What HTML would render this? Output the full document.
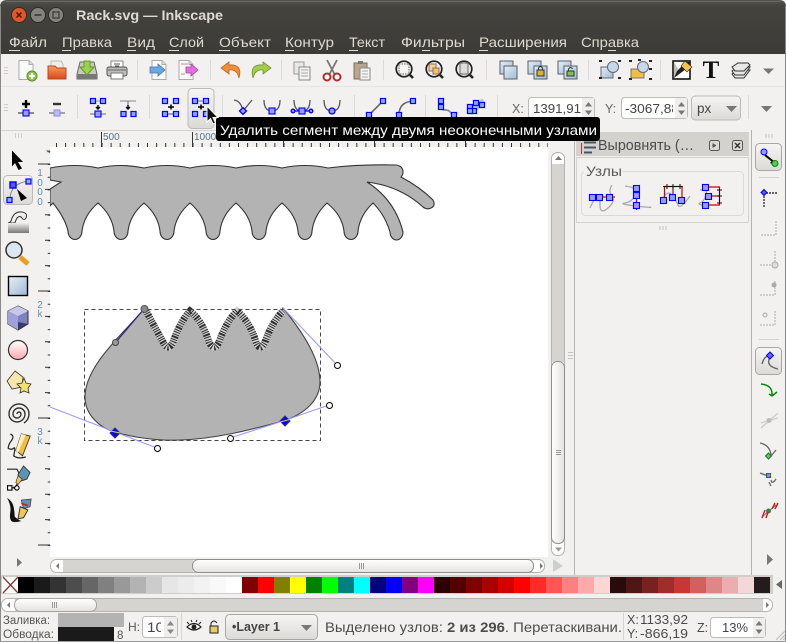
<!DOCTYPE html>
<html><head><meta charset="utf-8"><title>Rack.svg — Inkscape</title>
<style>
html,body{margin:0;padding:0;background:#f2f1f0;overflow:hidden}
svg{display:block}
text{font-family:"Liberation Sans","DejaVu Sans",sans-serif}
</style></head><body>
<svg xmlns="http://www.w3.org/2000/svg" width="786" height="642" viewBox="0 0 786 642">
<defs>
<linearGradient id="tb" x1="0" y1="0" x2="0" y2="1"><stop offset="0" stop-color="#55534d"/><stop offset=".12" stop-color="#45433e"/><stop offset="1" stop-color="#3c3b37"/></linearGradient>
<linearGradient id="btn" x1="0" y1="0" x2="0" y2="1"><stop offset="0" stop-color="#f6f5f4"/><stop offset="1" stop-color="#dcdad7"/></linearGradient>
<linearGradient id="thumbH" x1="0" y1="0" x2="0" y2="1"><stop offset="0" stop-color="#fff"/><stop offset="1" stop-color="#e4e2df"/></linearGradient>
<linearGradient id="thumbV" x1="0" y1="0" x2="1" y2="0"><stop offset="0" stop-color="#fff"/><stop offset="1" stop-color="#e4e2df"/></linearGradient>
<linearGradient id="blue" x1="0" y1="0" x2="1" y2="1"><stop offset="0" stop-color="#e6eef5"/><stop offset="1" stop-color="#9dbbd4"/></linearGradient>
<linearGradient id="pink" x1="0" y1="0" x2="0" y2="1"><stop offset="0" stop-color="#fff"/><stop offset="1" stop-color="#ffa8b0"/></linearGradient>
<linearGradient id="folder" x1="0" y1="0" x2="0" y2="1"><stop offset="0" stop-color="#f89a5c"/><stop offset="1" stop-color="#d8481c"/></linearGradient>
<linearGradient id="tw" x1="0" y1="0" x2="0" y2="1"><stop offset="0" stop-color="#eee"/><stop offset="1" stop-color="#777"/></linearGradient>
<rect id="n" x="-3" y="-3" width="6" height="6" fill="#9a9aff" stroke="#00f" stroke-width="1.100"/>
<rect id="m" x="-2.500" y="-2.500" width="5" height="5" fill="#8fa8ff" stroke="#00f" stroke-width="1.200"/>
<g id="page"><path d="M-7-9.500H3L7-5.500V9.500H-7Z" fill="#fafafa" stroke="#aaa"/><path d="M3-9.500V-5.500H7" fill="#ddd" stroke="#aaa"/></g>
<g id="mag"><circle cx="-1" cy="-1" r="7.800" fill="#eee" stroke="#222" stroke-width="1.700"/><path d="M5 5 L8 8" stroke="#222" stroke-width="2.600"/></g>
<g id="sq2"><rect x="-9" y="-9" width="13" height="13" fill="url(#blue)" stroke="#55606a"/></g>
</defs>

<rect width="786" height="642" fill="#f2f1f0"/>

<!-- title bar & menu -->
<path d="M0 54V7Q0 0 7 0H779Q786 0 786 7V54Z" fill="url(#tb)"/>
<rect y="1" x="6" width="774" height="1" fill="#6a6862"/>
<circle cx="19" cy="15" r="7.500" fill="#e4562a" stroke="#2e2d2a"/>
<path d="M16.500 12.500l5 5m0-5l-5 5" stroke="#4a1a08" stroke-width="1.500"/>
<circle cx="38" cy="15" r="7.500" fill="#85837c" stroke="#2e2d2a"/>
<path d="M34.500 15h7" stroke="#3a3934" stroke-width="1.600"/>
<circle cx="56" cy="15" r="7.500" fill="#85837c" stroke="#2e2d2a"/>
<rect x="53" y="12" width="6" height="6" fill="none" stroke="#3a3934" stroke-width="1.200"/>
<text x="76" y="20" font-size="14" font-weight="bold" fill="#dfdbd2" textLength="147" lengthAdjust="spacingAndGlyphs">Rack.svg — Inkscape</text>

<g font-size="14" fill="#dfdbd2">
<text x="9" y="47" textLength="38" lengthAdjust="spacingAndGlyphs">Файл</text>
<text x="62" y="47" textLength="50" lengthAdjust="spacingAndGlyphs">Правка</text>
<text x="127" y="47" textLength="28" lengthAdjust="spacingAndGlyphs">Вид</text>
<text x="169" y="47" textLength="35" lengthAdjust="spacingAndGlyphs">Слой</text>
<text x="219" y="47" textLength="52" lengthAdjust="spacingAndGlyphs">Объект</text>
<text x="285" y="47" textLength="49" lengthAdjust="spacingAndGlyphs">Контур</text>
<text x="349" y="47" textLength="36" lengthAdjust="spacingAndGlyphs">Текст</text>
<text x="401" y="47" textLength="64" lengthAdjust="spacingAndGlyphs">Фильтры</text>
<text x="479" y="47" textLength="88" lengthAdjust="spacingAndGlyphs">Расширения</text>
<text x="581" y="47" textLength="58" lengthAdjust="spacingAndGlyphs">Справка</text>
</g>
<path d="M9 50.500h11M62 50.500h9M127 50.500h9M169 50.500h10M219 50.500h11M285 50.500h9M349 50.500h9M422 50.500h8M479 50.500h9M608 50.500h8" stroke="#dfdbd2" fill="none"/>

<!-- toolbar separators -->
<path d="M0 86.500H786" stroke="#e6e5e3"/>
<path d="M1 130.500H575" stroke="#d6d4d1"/>
<path d="M137.500 60v20M210.500 60v20M281.500 60v20M383.500 60v20M486.500 60v20M588.500 60v20M660.500 60v20" stroke="#dcdad7"/>
<path d="M77.500 95v24M149.500 95v24M222.500 95v24M354.500 95v24M425.500 95v24M497.500 95v24M748.500 95v24" stroke="#dcdad7"/>
<path d="M4 67.500h4M4 70.500h4M4 73.500h4M4 104.500h4M4 107.500h4M4 110.500h4" stroke="#cfcdca"/>

<!-- Row 1 icons -->
<g transform="translate(27,70)"><use href="#page" x="-1"/><circle cx="5" cy="6" r="5" fill="#8fc750" stroke="#5b8f2a"/><path d="M5 3v6M2 6h6" stroke="#fff" stroke-width="1.800"/></g>
<g transform="translate(57,70)"><path d="M-6-9H4L6-6V0H-6Z" fill="#eee" stroke="#bba"/><path d="M-9-4H-2L0-2H9V9H-9Z" fill="url(#folder)" stroke="#b84a20"/></g>
<g transform="translate(87,70)"><path d="M-7-8H7L10 4V9H-10V4Z" fill="#c7c9c3" stroke="#666"/><rect x="-10" y="4" width="20" height="5" fill="#777"/><path d="M-3-9H3V-3H7L0 5-7-3H-3Z" fill="#9bd24a" stroke="#5f9a22"/></g>
<g transform="translate(117,70)"><rect x="-6" y="-9" width="12" height="7" fill="#fff" stroke="#888"/><rect x="-10" y="-3" width="20" height="9" rx="2" fill="#bdbdb9" stroke="#555"/><rect x="-6" y="3" width="12" height="6" fill="#fff" stroke="#777"/><path d="M-3-6h6M-2-4h4" stroke="#555"/><path d="M-9 0h18" stroke="#666"/></g>
<g transform="translate(158,70)"><use href="#page" x="1"/><path d="M-8-3H0V-6L7 0 0 6V3H-8Z" fill="#6da5dc" stroke="#3f79b5" stroke-width=".8"/></g>
<g transform="translate(188,70)"><use href="#page" x="-2"/><path d="M-2-3H3V-6L10 0 3 6V3H-2Z" fill="#e06fe0" stroke="#a93fa9" stroke-width=".8"/><path d="M-7-6H0M-7 4h4" stroke="#c88"/></g>
<g transform="translate(231,70)"><path d="M-2-8L-10-2-2 4V0Q6-1 8 8Q12-6-2-5Z" fill="#ef8e3c" stroke="#c56216" stroke-width=".8"/></g>
<g transform="translate(261,70)"><path d="M2-8L10-2 2 4V0Q-6-1-8 8Q-12-6 2-5Z" fill="#a3cb4d" stroke="#6d9624" stroke-width=".8"/></g>
<g transform="translate(302,70)"><rect x="-8" y="-8" width="10" height="12" fill="#e8e8e6" stroke="#999"/><rect x="-3" y="-3" width="11" height="13" fill="#f2f2f0" stroke="#888"/><path d="M-1 0h7M-1 3h7M-1 6h7" stroke="#aaa"/></g>
<g transform="translate(332,70)"><path d="M-5-10L3 5M5-10L-3 5" stroke="#777" stroke-width="1.800"/><circle cx="-5" cy="7" r="3.500" fill="#fff" stroke="#b52a2a" stroke-width="2"/><circle cx="5" cy="7" r="3.500" fill="#fff" stroke="#b52a2a" stroke-width="2"/></g>
<g transform="translate(362,70)"><rect x="-8" y="-7" width="13" height="16" fill="#b8a68f" stroke="#7d6f5a"/><rect x="-4" y="-9" width="5" height="3" fill="#777"/><rect x="-2" y="-2" width="10" height="12" fill="#f5f5f3" stroke="#888"/><path d="M0 1h6M0 4h6M0 7h6" stroke="#aaa"/></g>
<g transform="translate(405,70)"><use href="#mag"/><rect x="-6" y="-6" width="10" height="10" fill="#f4f4f4" stroke="#666" stroke-dasharray="1.500 1"/></g>
<g transform="translate(435,70)"><use href="#mag"/><rect x="-6" y="-6" width="7" height="7" fill="#f0d88a" stroke="#967"/><rect x="-2" y="-2" width="6" height="6" fill="#f0c860" stroke="#967"/></g>
<g transform="translate(465,70)"><use href="#mag"/><rect x="-5" y="-7" width="8" height="11" fill="#ddd" stroke="#666"/></g>
<g transform="translate(508,70)"><use href="#sq2" x="1"/><rect x="-4" y="-4" width="13" height="13" fill="url(#blue)" stroke="#55606a"/></g>
<g transform="translate(538,70)"><use href="#sq2" x="-1"/><rect x="-4" y="-4" width="13" height="13" fill="url(#blue)" stroke="#55606a"/><rect x="-1" y="0" width="7" height="6" fill="#e0b030" stroke="#333"/><path d="M0.500 0v-2q2-3 4 0v2" fill="none" stroke="#333"/></g>
<g transform="translate(568,70)"><use href="#sq2" x="-1"/><rect x="-4" y="-4" width="13" height="13" fill="url(#blue)" stroke="#55606a"/><rect x="-1" y="1" width="7" height="5" fill="#7cc24a" stroke="#333"/><path d="M0.500 1v-2q2-3 4 0" fill="none" stroke="#333"/></g>
<g transform="translate(610,70)"><rect x="-9" y="-3" width="12" height="11" fill="url(#blue)" stroke="#667"/><circle cx="3" cy="-3" r="5.500" fill="#c5d9e8" stroke="#667"/><path d="M-11-9h3M-11 8h3M8-9h3M8 8h3" stroke="#222" stroke-width="2"/></g>
<g transform="translate(640,70)"><rect x="-9" y="-1" width="13" height="9" fill="#f0bf40" stroke="#776"/><circle cx="3" cy="-3" r="5.500" fill="#c5d9e8" stroke="#667"/><path d="M-11-9h3M-11 9h3M9-9h3M9 9h3M-2-10h3M9-1h3" stroke="#222" stroke-width="2"/></g>
<g transform="translate(682,70)"><rect x="-9" y="-9" width="17" height="18" fill="#fff" stroke="#111" stroke-width="1.600"/><path d="M-8 8V4L4-8H8V-4Z" fill="#222"/><path d="M-8 8L-4-1-8-8Z" fill="#bbb"/><path d="M3-9L10-3 5 2-1-4Z" fill="#f3c44a" stroke="#222" stroke-width=".6"/></g>
<text x="711" y="78" font-size="25" font-weight="bold" text-anchor="middle" fill="#111" style="font-family:'Liberation Serif',serif">T</text>
<g transform="translate(741,70)" fill="#e8e8e6" stroke="#333"><path d="M-9 4L-3 0H9L3 8H-6Z"/><path d="M-9 1L-3-3H9L3 5H-6Z"/><path d="M-9-3L-3-7H7L9-5 3 1H-6Z"/></g>
<path d="M763 68.500h11L768.500 74Z" fill="#777"/>

<!-- Row 2 hover button -->
<rect x="188" y="88.500" width="26" height="40" rx="4" fill="url(#btn)" stroke="#bdbbb7"/>

<!-- Row 2 icons -->
<g transform="translate(26,108)"><path d="M-8 5H8" stroke="#666" stroke-width="1.500"/><path d="M0-8v8M-4-4H4" stroke="#000" stroke-width="2.400"/><use href="#n" y="5"/></g>
<g transform="translate(57,108)"><path d="M-8 5H8" stroke="#888" stroke-width="1.500"/><path d="M-4-4H4" stroke="#333" stroke-width="2.400"/><rect x="-3" y="2" width="6" height="6" fill="#bbbbff" stroke="#8888dd"/></g>
<g transform="translate(98,108)"><path d="M-8 6H8" stroke="#666"/><path d="M-7-7H7" stroke="#999"/><use href="#m" x="-5" y="-7"/><use href="#m" x="5" y="-7"/><use href="#n" y="6"/><path d="M0-3v3M-2-1l2 2 2-2" stroke="#000" stroke-width="1.400" fill="none"/></g>
<g transform="translate(128,108)"><path d="M-8-7H8" stroke="#888"/><path d="M0-7V0" stroke="#666"/><use href="#m" x="-4.500" y="6"/><use href="#m" x="5.500" y="6"/><path d="M0-3v3M-2-1l2 2 2-2" stroke="#000" stroke-width="1.400" fill="none"/></g>
<g transform="translate(171,108)"><use href="#m" x="-6" y="-7"/><use href="#m" x="5" y="-7"/><path d="M-6 6H5" stroke="#555"/><use href="#m" x="-6" y="6"/><use href="#m" x="5" y="6"/><path d="M-3-1h6M0-3.500v5" stroke="#000" stroke-width="1.500"/></g>
<g transform="translate(201,108)"><path d="M-8-7H8" stroke="#777"/><use href="#m" x="-6" y="-7"/><use href="#m" x="5" y="-7"/><use href="#m" x="-6" y="6"/><use href="#m" x="5" y="6"/><path d="M-3-1h6M0-3.500v5" stroke="#000" stroke-width="1.500"/></g>
<g fill="none" stroke="#555" stroke-width="1.300">
<g transform="translate(243,108)"><path d="M-9-8Q-2-7 0 3M9-8Q5-3 0 3"/><path d="M0-.5L3.500 3 0 6.500-3.500 3Z" fill="#99f" stroke="#00f"/></g>
<g transform="translate(272,108)"><path d="M-8-8Q-8 3 0 3T8-8"/><use href="#n" y="3"/></g>
<g transform="translate(302,108)"><path d="M-8-8Q-8 3 0 3T8-8"/><path d="M-9 3H9" stroke="#00f"/><circle cx="-9" cy="3" r="1.800" fill="#99f" stroke="#00f"/><circle cx="9" cy="3" r="1.800" fill="#99f" stroke="#00f"/><use href="#n" y="3"/></g>
<g transform="translate(332,108)"><path d="M-8-8Q-8 3 0 3T8-8"/><circle cy="3" r="3" fill="#99f" stroke="#00f"/></g>
<g transform="translate(376,108)"><path d="M-7 7L7-7" stroke="#666" stroke-width="1.600"/><use href="#m" x="-7" y="7"/><use href="#m" x="7" y="-7"/></g>
<g transform="translate(406,108)"><path d="M-7 7Q-7-6 7-7" stroke="#666" stroke-width="1.600"/><use href="#m" x="-7" y="7"/><use href="#m" x="7" y="-7"/></g>
<g transform="translate(446,108)"><path d="M-6-8V0Q-4 2 0 2T7 8" stroke="#888" stroke-width="1.800"/><use href="#m" x="-5" y="-7"/><use href="#m" x="-5" y="-1"/><use href="#m" x="8" y="7"/></g>
<g transform="translate(476,108)"><path d="M-5 3L8-7" stroke="#a9c2dc" stroke-width="6"/><use href="#m" x="-6" y="-1"/><use href="#m" x="0" y="-5"/><use href="#m" x="-2" y="3"/><use href="#m" x="6" y="-3"/><use href="#m" x="-6" y="3"/></g>
</g>

<!-- X Y fields -->
<text x="512" y="113" font-size="12.500" fill="#666">X:</text>
<rect x="528.500" y="97.500" width="66" height="21" rx="3" fill="#fff" stroke="#bdbbb7"/>
<text x="533" y="113" font-size="13" fill="#444" textLength="48" lengthAdjust="spacingAndGlyphs">1391,91</text>
<rect x="582" y="98" width="12" height="20" fill="#efeeec"/>
<path d="M585 106.500h7L588.500 102ZM585 110.500h7L588.500 115Z" fill="#777"/>
<text x="605" y="113" font-size="12.500" fill="#666">Y:</text>
<rect x="621.500" y="97.500" width="66" height="21" rx="3" fill="#fff" stroke="#bdbbb7"/>
<text x="625" y="113" font-size="13" fill="#444" textLength="54" lengthAdjust="spacingAndGlyphs">-3067,88</text>
<rect x="673" y="98" width="14" height="20" fill="#fff"/>
<rect x="675" y="98" width="12" height="20" fill="#efeeec"/>
<path d="M678 106.500h7L681.500 102ZM678 110.500h7L681.500 115Z" fill="#777"/>
<rect x="691.500" y="96" width="49" height="24" rx="4" fill="url(#btn)" stroke="#bdbbb7"/>
<text x="697" y="113" font-size="13.500" fill="#444">px</text>
<path d="M726 106h11L731.500 112Z" fill="#777"/>
<path d="M761 106h11L766.500 112Z" fill="#777"/>

<!-- canvas -->
<rect x="50" y="147" width="498" height="410" fill="#fff"/>

<!-- upper shape -->
<path d="M50 168Q75 163 98 168Q121 163 144 168Q167 163 190 168Q213 163 236 168Q259 163 282 168Q305 163 328 168Q360 164 396 165Q403 166 403 172Q403 175 401 177Q420 187 433 200Q436 206 431 208Q427 210 423 207Q400 186 367 182Q395 200 403 232A6.500 8 0 0 1 390 232Q385 215 373 203Q360 215 358 231A7 8.500 0 0 1 344 231Q342 215 327 203Q314 215 312 231A7 8.500 0 0 1 298 231Q296 215 282 203Q268 215 266 231A7 8.500 0 0 1 252 231Q250 215 236 203Q222 215 220 231A7 8.500 0 0 1 206 231Q204 215 190 203Q176 215 174 231A7 8.500 0 0 1 160 231Q158 215 144 203Q130 215 128 231A7 8.500 0 0 1 114 231Q112 215 98 203Q84 215 82 231A7 8.500 0 0 1 68 231Q65 218 53 203L50 206V189L61 182 50 180Z" fill="#b3b3b3" stroke="#333" stroke-width="1.100"/>

<!-- lower shape -->
<path d="M144 309C125 332 85 365 85 397C85 415 100 428 115 432C135 438 160 441 180 440C215 439 250 430 283 421C305 414 320 400 320 382C320 360 305 335 283 308Q270 325 264 345Q260 350 257 345Q250 322 237 308Q225 322 218 345Q214 350 211 345Q205 320 190 308Q178 325 172 345Q168 350 165 345Q160 325 144 309Z" fill="#b3b3b3" stroke="#444" stroke-width="1.100"/>
<path d="M146 311L163 342Q168 352 173 342Q180 322 190 311Q202 320 209 342Q214 352 219 342Q226 322 237 311Q250 322 256 342Q260 352 265 342Q272 322 283 311" fill="none" stroke="#d0d0d0" stroke-width="7"/>
<path d="M146 311L163 342Q168 352 173 342Q180 322 190 311Q202 320 209 342Q214 352 219 342Q226 322 237 311Q250 322 256 342Q260 352 265 342Q272 322 283 311" fill="none" stroke="#111" stroke-width="7" stroke-dasharray="1 1.200 1 1.200 2 1 1 1.600" opacity=".85"/>
<rect x="84.500" y="309.500" width="236" height="131" fill="none" stroke="#444" stroke-dasharray="4 3"/>
<!-- handles -->
<path d="M144 309L116 342" stroke="#22228c" stroke-width="1.100"/>
<path d="M283 308L337 365M50 407L115 432L157 448M230 438L283 421L329 405" stroke="#9b9bff" stroke-width="1.100" fill="none"/>
<circle cx="115.500" cy="342.500" r="3" fill="#999" stroke="#444"/>
<circle cx="144.500" cy="309" r="3.500" fill="#888" stroke="#555"/>
<circle cx="337.500" cy="365.500" r="3" fill="#fff" stroke="#000"/>
<circle cx="157.500" cy="448.500" r="3" fill="#fff" stroke="#000"/>
<circle cx="230.500" cy="438.500" r="3" fill="#fff" stroke="#000"/>
<circle cx="329.500" cy="405.500" r="3" fill="#fff" stroke="#000"/>
<path d="M115 428L120 433 115 438 110 433Z" fill="#00f" stroke="#33337a"/>
<path d="M110.500 431L120 433" stroke="#e6d640"/>
<path d="M285 416L290 421 285 426 280 421Z" fill="#00f" stroke="#33337a"/>
<path d="M280 422L290 419.500" stroke="#e6d640"/>

<!-- rulers -->
<rect x="1" y="131" width="49" height="16" fill="#f2f1f0"/>
<rect x="0" y="147" width="50" height="426" fill="#f2f1f0"/>
<rect x="50" y="131" width="498" height="16" fill="#f2f1f0"/>
<g stroke="#333" fill="none">
<line x1="49" y1="151.300" x2="49" y2="557" stroke-width="2.500" stroke-dasharray="1 11.700"/>
<line x1="47.500" y1="163.500" x2="47.500" y2="557" stroke-width="5" stroke-dasharray="1 24.400"/>
<line x1="44" y1="163.500" x2="44" y2="557" stroke-width="12" stroke-dasharray="1 126"/>
<line x1="56" y1="145" x2="548" y2="145" stroke-width="4" stroke-dasharray="1 8.100"/>
<path d="M101.500 132V147M192.500 132V147M283.500 132V147M374.500 132V147M465.500 132V147" stroke-width="1"/>
</g>
<path d="M46 150.500H50V153L47 151.500Z" fill="#555"/>
<text x="103" y="140" font-size="10" fill="#5a7288">500</text>
<text x="194" y="140" font-size="10" fill="#5a7288">1000</text>
<g font-size="10" fill="#5f8fb8" text-anchor="middle"><text x="40" y="176">1</text><text x="40" y="186">0</text><text x="40" y="195">0</text><text x="40" y="205">0</text><text x="40" y="308">2</text><text x="40" y="317">k</text><text x="40" y="435">3</text><text x="40" y="444">k</text></g>
<path d="M15.500 133v5M18.500 133v5M21.500 133v5" stroke="#cfcdca"/>

<!-- Left tools -->
<path d="M12 149.500L23 161 18 161 22 167.500 18.500 169 15 162 12 165.500Z" fill="#000" transform="translate(0,1)"/>
<rect x="3.500" y="175.500" width="29" height="29" rx="4" fill="url(#btn)" stroke="#bdbbb7"/>
<path d="M10 199Q10 184 28 181" fill="none" stroke="#888"/>
<use href="#m" x="28.500" y="181.500"/><use href="#m" x="9.500" y="200"/>
<rect x="10" y="182" width="6" height="6" fill="#55f" stroke="#00f" stroke-width="1.400"/>
<path d="M17 189L27 198 21 201Z" fill="#000"/>
<g transform="translate(18,222)"><path d="M-10 1Q-7 1-6-4Q-3-11 4-10Q10-9 8-4Q6-1 4-4Q2-7-1-4Q-3 0-3 1Z" fill="#eee" stroke="#333"/><rect x="-10" y="1" width="21" height="10" fill="url(#tw)"/></g>
<g transform="translate(14,250)"><path d="M6 7L14 14" stroke="#e6a020" stroke-width="5"/><circle r="8" cx="0" cy="0" fill="#dbe7f0" stroke="#333" stroke-width="1.500"/></g>
<rect x="8.500" y="276.500" width="19" height="19" fill="url(#blue)" stroke="#000" stroke-width="1.400"/>
<g transform="translate(18,318)"><path d="M0-12L10-7V6L0 12-10 6V-7Z" fill="#8080c0" stroke="#333"/><path d="M0-12L10-7 0-2-10-7Z" fill="#c8c8e8"/><path d="M-10-7L0-2V12L-10 6Z" fill="#a0a0d8"/><path d="M0 4L10 6 0 12Z" fill="#3a3a6a"/></g>
<circle cx="18" cy="350" r="9.500" fill="url(#pink)" stroke="#333" stroke-width="1.200"/>
<g transform="translate(18,382)" stroke="#333" stroke-width=".8"><path d="M-3-11L5-5 4 5-6 7-11-1Z" fill="#f5e8a8"/><path d="M6-4L8 1 13 2 10 6 11 11 6 9 2 11 3 6-1 2 4 1Z" fill="#f5e070"/></g>
<path d="M17 414a2 2 0 0 1 4 0a4 4 0 0 1-8 0a6 6 0 0 1 12 0a8 8 0 0 1-16 0a10 10 0 0 1 20 0a11 11 0 0 1-5 9" fill="none" stroke="#333" stroke-width="1.400"/>
<g transform="translate(17,446) scale(1.100)"><path d="M-6-11Q-2-9-5-5T-8 2Q-5 4-3 2T-3 9Q1 12 8 10" fill="none" stroke="#222" stroke-width="1.100"/><path d="M4-11L12-9 5 9 -1 4Z" fill="#f3bd3e" stroke="#333" stroke-width=".8"/><path d="M4-11L8-10 1 6-1 4Z" fill="#fff0c0"/></g>
<g transform="translate(18,478) scale(1.100)"><path d="M-10-8H-1Q3-2 0 4T-4 8" fill="none" stroke="#222"/><rect x="-9.500" y="7" width="4" height="4" fill="#fff" stroke="#000"/><circle cx="-1" cy="9" r="2" fill="#fff" stroke="#000"/><path d="M-5 9H-3" stroke="#000"/><path d="M5-11L11-5 8 1 2 3 0-3Z" fill="#5d93b5" stroke="#333" stroke-width=".8"/><path d="M0-2L4 1 0 6-2 4Z" fill="#f3c45a" stroke="#333" stroke-width=".6"/></g>
<g transform="translate(18,510) scale(1.100)"><path d="M-10-11Q-5-8-4-3T-3 6Q0 9 3 10Q-4 12-6 10T-7 2T-10-11Z" fill="#111"/><path d="M3-9L12-10 11-3 5-1Z" fill="#5d93b5" stroke="#333" stroke-width=".6"/><path d="M3-6L9-4" stroke="#c02020" stroke-width="1.500"/><path d="M2-3L9 0 5 7 0 8Z" fill="#f3c45a" stroke="#222" stroke-width=".8"/></g>

<!-- Vertical scrollbar -->
<rect x="549" y="147" width="25" height="425" fill="#f2f1f0"/>
<rect x="551.500" y="152.500" width="13" height="403" rx="6" fill="#fff" stroke="#b5b3af"/>
<rect x="552" y="164" width="12" height="198" fill="#d6d4d1"/>
<rect x="551.500" y="361.500" width="13" height="182" rx="6" fill="url(#thumbV)" stroke="#8f8d89"/>
<path d="M555 160h7L558.500 156Z" fill="#777"/>
<path d="M555 547.500h7L558.500 551.500Z" fill="#999"/>
<path d="M556 450.500h5M556 452.500h5M556 454.500h5" stroke="#999"/>
<path d="M568 352.500h5M568 355.500h5M568 358.500h5" stroke="#c5c3c0"/>
<path d="M574.500 130V575" stroke="#b5b3af"/>

<!-- Dock panel -->
<rect x="576" y="132" width="173" height="24" fill="#d3d2cf"/>
<path d="M581.500 143v11" stroke="#b33"/>
<path d="M584 142.500h12M584 147.500h12M584 152.500h8" stroke="#456" stroke-width="2"/>
<text x="598" y="150" font-size="14.500" fill="#4c4c4c" textLength="96" lengthAdjust="spacingAndGlyphs">Выровнять (…</text>
<rect x="709.500" y="140.500" width="10" height="10" rx="2" fill="#dcdad7" stroke="#555"/>
<path d="M712.500 143v5l4-2.500Z" fill="#555"/>
<rect x="732.500" y="140.500" width="10" height="10" rx="2" fill="#dcdad7" stroke="#555"/>
<path d="M735 143l5 5m0-5l-5 5" stroke="#333" stroke-width="1.500"/>
<rect x="576.500" y="157.500" width="172" height="65" fill="#f2f1f0" stroke="#d3d2cf"/>
<rect x="581.500" y="171.500" width="162" height="44" rx="4" fill="none" stroke="#dcdad7"/>
<rect x="584" y="166" width="38" height="10" fill="#f2f1f0"/>
<text x="586" y="176" font-size="14" fill="#5a5a5a" textLength="36" lengthAdjust="spacingAndGlyphs">Узлы</text>
<g fill="none" stroke="#aaa" stroke-width="1.300">
<path d="M590 208Q596 195 598 195T600 205 608 208 612 196 612 185"/>
<path d="M625 186Q640 188 636 195T625 203 636 206 650 207"/>
<path d="M663 198Q668 190 672 195T678 205 690 196"/>
<path d="M700 190Q708 188 706 195T700 203 708 207"/>
</g>
<path d="M589 197H615" stroke="#c00" stroke-width="1.300"/>
<use href="#n" x="592.500" y="197.500"/><use href="#n" x="599.500" y="197.500"/><use href="#n" x="609.500" y="197.500"/>
<path d="M636.500 185V210" stroke="#c00" stroke-width="1.300"/>
<use href="#n" x="636.500" y="188.500"/><use href="#n" x="636.500" y="195.500"/><use href="#n" x="636.500" y="205.500"/>
<path d="M663 186.500H683M664.500 186V200M673 186V197M682 186V200" stroke="#c00" stroke-width="1.200" fill="none"/>
<path d="M664 186.500H682M667 184v5M673 184v5M680 184v5" stroke="#111" fill="none"/>
<use href="#n" x="663.500" y="200.500"/><use href="#n" x="672.500" y="197.500"/><use href="#n" x="681.500" y="200.500"/>
<path d="M705 187H720M708 196H720M705 205H720M719.500 187V205" stroke="#c00" stroke-width="1.200" fill="none"/>
<path d="M719.500 189v15M717 190h5M717 196h5M717 203h5" stroke="#111" fill="none"/>
<use href="#n" x="705.500" y="187.500"/><use href="#n" x="708.500" y="196.500"/><use href="#n" x="705.500" y="205.500"/>
<path d="M660 226v4M663 226v4M666 226v4" stroke="#c5c3c0"/>
<path d="M751.500 130V575" stroke="#b5b3af"/>

<!-- Right toolbar -->
<path d="M766 134v4M769 134v4M772 134v4" stroke="#c5c3c0"/>
<rect x="755.500" y="143.500" width="26" height="27" rx="4" fill="url(#btn)" stroke="#a9a7a3"/>
<path d="M765 155L775 163" stroke="#000" stroke-width="2"/><path d="M775 165L770 163 773 160Z" fill="#000"/>
<circle cx="764" cy="152" r="3" fill="#99f" stroke="#00f"/>
<circle cx="775" cy="163.500" r="3" fill="#5c5" stroke="#080"/>
<path d="M759 177.500H779M759 339.500H779" stroke="#d6d4d1"/>
<path d="M763 193H778M764 193V207" stroke="#333" stroke-dasharray="2 1" stroke-width="1.400" fill="none"/>
<path d="M764 189.500l3 3-3 3-3-3Z" fill="#55f" stroke="#00f"/>
<g stroke="#aaa" fill="none" stroke-dasharray="2 1">
<path d="M761 235H776V221"/>
<path d="M760 265H775V251"/>
<path d="M760 295H775V280"/>
<path d="M760 325H775V310"/>
</g>
<circle cx="775" cy="265" r="3" fill="#ddd" stroke="#aaa"/>
<circle cx="774" cy="285" r="2.500" fill="#aaa"/>
<circle cx="765" cy="315" r="2" fill="#eee" stroke="#aaa"/>
<rect x="755.500" y="347.500" width="26" height="27" rx="4" fill="url(#btn)" stroke="#a9a7a3"/>
<path d="M762 364Q765 354 770 357Q765 366 778 369" fill="none" stroke="#666" stroke-width="1.400"/>
<path d="M770 352l3.500 3.500-3.500 3.500-3.500-3.500Z" fill="#66f" stroke="#00f"/>
<path d="M761 384Q773 385 772 396M772 396L769 394M772 396L777 392" fill="none" stroke="#080" stroke-width="1.500"/>
<path d="M761 428L778 413M761 423L778 418" stroke="#ccc" stroke-width="1.400"/><circle cx="769" cy="420.500" r="2.500" fill="#bbb"/>
<path d="M760 443Q770 445 771 455M771 456L776 450" fill="none" stroke="#666" stroke-width="1.300"/>
<path d="M768.500 453l3 3-3 3-3-3Z" fill="#8a8" stroke="#080"/>
<path d="M760 473L768 476M771 480Q772 485 776 479M771 486L769 482" fill="none" stroke="#666" stroke-width="1.300"/>
<rect x="766.500" y="473.500" width="4" height="4" fill="#88d" stroke="#080"/>
<path d="M762 517L776 505" stroke="#777"/>
<circle cx="768.500" cy="511" r="2.500" fill="#2a8a3a"/>
<path d="M762 518l3-8M766 518l2-6M772 509l3-6M775 509l3-6" stroke="#d01818" stroke-width="1.400"/>
<path d="M767 554v11l6-5.500Z" fill="#777"/>

<!-- horizontal scrollbar row -->
<rect x="0" y="557" width="574" height="18" fill="#f2f1f0"/>
<rect x="50.500" y="559.500" width="494" height="13" rx="6" fill="#fff" stroke="#b5b3af"/>
<rect x="63" y="560" width="130" height="12" fill="#d6d4d1"/>
<rect x="192.500" y="559.500" width="341" height="13" rx="6" fill="url(#thumbH)" stroke="#8f8d89"/>
<path d="M59 563v6l-3-3Z" fill="#777"/><path d="M540 563v6l3-3Z" fill="#777"/>
<path d="M359.500 563v6M361.500 563v6M363.500 563v6" stroke="#999"/>
<path d="M17 558v9l5-4.500Z" fill="#777"/>
<path d="M553 559L563 566 553 572Z" fill="#cdd0d0"/>

<!-- palette -->
<rect x="1" y="575" width="772" height="19" fill="#d0ceca"/>
<rect x="2" y="577" width="16" height="16" fill="#fff"/>
<path d="M3 577L18 593M18 577L3 593" stroke="#8a3a2a" stroke-width="1.300"/>
<g>
<rect x="18" y="577" width="16" height="16" fill="#000"/><rect x="34" y="577" width="16" height="16" fill="#1a1a1a"/><rect x="50" y="577" width="16" height="16" fill="#333"/><rect x="66" y="577" width="16" height="16" fill="#4d4d4d"/><rect x="82" y="577" width="16" height="16" fill="#666"/><rect x="98" y="577" width="16" height="16" fill="#808080"/><rect x="114" y="577" width="16" height="16" fill="#999"/><rect x="130" y="577" width="16" height="16" fill="#b3b3b3"/><rect x="146" y="577" width="16" height="16" fill="#ccc"/><rect x="162" y="577" width="16" height="16" fill="#e6e6e6"/><rect x="178" y="577" width="16" height="16" fill="#ececec"/><rect x="194" y="577" width="16" height="16" fill="#f2f2f2"/><rect x="210" y="577" width="16" height="16" fill="#f9f9f9"/><rect x="226" y="577" width="16" height="16" fill="#fff"/>
<rect x="242" y="577" width="16" height="16" fill="#800000"/><rect x="258" y="577" width="16" height="16" fill="#f00"/><rect x="274" y="577" width="16" height="16" fill="#808000"/><rect x="290" y="577" width="16" height="16" fill="#ff0"/><rect x="306" y="577" width="16" height="16" fill="#008000"/><rect x="322" y="577" width="16" height="16" fill="#0f0"/><rect x="338" y="577" width="16" height="16" fill="#008080"/><rect x="354" y="577" width="16" height="16" fill="#0ff"/><rect x="370" y="577" width="16" height="16" fill="#000080"/><rect x="386" y="577" width="16" height="16" fill="#00f"/><rect x="402" y="577" width="16" height="16" fill="#800080"/><rect x="418" y="577" width="16" height="16" fill="#f0f"/>
<rect x="434" y="577" width="16" height="16" fill="#2b0000"/><rect x="450" y="577" width="16" height="16" fill="#500"/><rect x="466" y="577" width="16" height="16" fill="#800000"/><rect x="482" y="577" width="16" height="16" fill="#a00"/><rect x="498" y="577" width="16" height="16" fill="#d40000"/><rect x="514" y="577" width="16" height="16" fill="#f00"/><rect x="530" y="577" width="16" height="16" fill="#ff2a2a"/><rect x="546" y="577" width="16" height="16" fill="#f55"/><rect x="562" y="577" width="16" height="16" fill="#ff8080"/><rect x="578" y="577" width="16" height="16" fill="#faa"/><rect x="594" y="577" width="16" height="16" fill="#ffd5d5"/>
<rect x="610" y="577" width="16" height="16" fill="#280b0b"/><rect x="626" y="577" width="16" height="16" fill="#501616"/><rect x="642" y="577" width="16" height="16" fill="#782121"/><rect x="658" y="577" width="16" height="16" fill="#a02c2c"/><rect x="674" y="577" width="16" height="16" fill="#c83737"/><rect x="690" y="577" width="16" height="16" fill="#d35f5f"/><rect x="706" y="577" width="16" height="16" fill="#de8787"/><rect x="722" y="577" width="16" height="16" fill="#e9afaf"/><rect x="738" y="577" width="16" height="16" fill="#f4d7d7"/><rect x="754" y="577" width="16" height="16" fill="#241c1c"/>
</g>
<path d="M782 580v9l-6-4.500Z" fill="#666"/>

<!-- palette scrollbar -->
<rect x="1.500" y="598.500" width="771" height="13" rx="6" fill="#fff" stroke="#b5b3af"/>
<rect x="15" y="599" width="748" height="12" fill="#d6d4d1"/>
<rect x="14.500" y="598.500" width="82" height="13" rx="6" fill="url(#thumbH)" stroke="#a5a39f"/>
<path d="M10 602v6l-3-3Z" fill="#777"/><path d="M766 602v6l3-3Z" fill="#777"/>
<path d="M52.500 602v6M54.500 602v6M56.500 602v6" stroke="#999"/>

<!-- status bar -->
<text x="3" y="624" font-size="11.500" fill="#555" textLength="47" lengthAdjust="spacingAndGlyphs">Заливка:</text>
<text x="3" y="638" font-size="11.500" fill="#555" textLength="51" lengthAdjust="spacingAndGlyphs">Обводка:</text>
<rect x="58" y="613" width="66" height="14" fill="#b3b3b3"/>
<rect x="58" y="627" width="56" height="14" fill="#1a1a1a"/>
<text x="117" y="639" font-size="11.500" fill="#555">8</text>
<text x="128" y="631" font-size="12" fill="#555">H:</text>
<rect x="142.500" y="616.500" width="35" height="21" rx="3" fill="#fff" stroke="#bdbbb7"/>
<text x="147" y="632" font-size="13.500" fill="#444" textLength="17" lengthAdjust="spacingAndGlyphs">10</text>
<rect x="161" y="617" width="3" height="20" fill="#fff"/>
<rect x="164" y="617" width="13" height="20" fill="#efeeec"/>
<path d="M167 625.500h7L170.500 621ZM167 629.500h7L170.500 634Z" fill="#888"/>
<path d="M181.500 613V640" stroke="#d6d4d1"/>
<g transform="translate(194,627)"><path d="M-7 0Q0-7 7 0Q0 6-7 0Z" fill="#fff" stroke="#222" stroke-width="1.200"/><circle r="2.500" fill="#222"/><path d="M-5-3l-2-2M-2-5l-1-2M2-5l1-2M5-3l2-2" stroke="#222"/></g>
<g transform="translate(214,628)"><rect x="-4" y="-2" width="8" height="7" fill="#e9c96a" stroke="#222"/><path d="M-3-2V-5Q0-9 3-5" fill="none" stroke="#222"/></g>
<rect x="225.500" y="614.500" width="92" height="25" rx="4" fill="url(#btn)" stroke="#a9a7a3"/>
<text x="232" y="631" font-size="13" font-weight="bold" fill="#444" textLength="48" lengthAdjust="spacingAndGlyphs">•Layer 1</text>
<path d="M301 625h11L306.500 631Z" fill="#777"/>
<text x="325" y="632" font-size="14" fill="#4c4c4c" textLength="297" lengthAdjust="spacingAndGlyphs">Выделено узлов: <tspan font-weight="bold">2 из 296</tspan>. Перетаскивани.</text>
<path d="M623.500 613V640" stroke="#d6d4d1"/>
<text x="627" y="624" font-size="12.500" fill="#4c4c4c">X:</text>
<text x="640" y="624" font-size="12.500" fill="#4c4c4c" textLength="48" lengthAdjust="spacingAndGlyphs">1133,92</text>
<text x="627" y="638" font-size="12.500" fill="#4c4c4c">Y:</text>
<text x="640" y="638" font-size="12.500" fill="#4c4c4c" textLength="48" lengthAdjust="spacingAndGlyphs">-866,19</text>
<text x="697" y="632" font-size="12.500" fill="#4c4c4c">Z:</text>
<rect x="710.500" y="617.500" width="55" height="20" rx="3" fill="#fff" stroke="#bdbbb7"/>
<rect x="753" y="618" width="12" height="19" fill="#efeeec"/>
<text x="722" y="632" font-size="13" fill="#444">13%</text>
<path d="M755.500 625.500h7L759 621ZM755.500 629.500h7L759 634Z" fill="#777"/>
<path d="M776 640L785 631M780 640L785 635M783 640L785 638" stroke="#bbb" fill="none"/>

<!-- window edges -->
<path d="M0.500 6V642M785.500 6V642" stroke="#8a8986"/>
<path d="M0 641.500H786" stroke="#9a9996"/>

<!-- tooltip -->
<rect x="216" y="117" width="384" height="24" rx="3" fill="#000"/>
<text x="220" y="135" font-size="14" fill="#fff" textLength="377" lengthAdjust="spacingAndGlyphs">Удалить сегмент между двумя неоконечными узлами</text>
<!-- cursor -->
<path d="M207 106V122L210.500 118.500 213 124 215.500 123 213 117.500 218 117.500Z" fill="#111" stroke="#fff" stroke-width="1"/>
</svg>
</body></html>
